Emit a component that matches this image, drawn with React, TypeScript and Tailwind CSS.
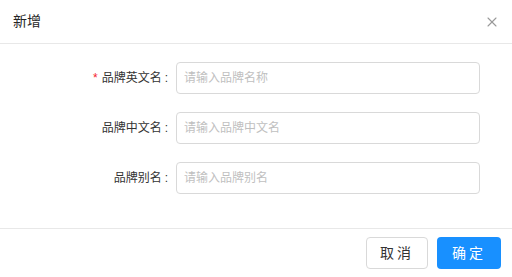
import { X } from "lucide-react";

const fields = [
  { label: "品牌英文名", placeholder: "请输入品牌名称", required: true },
  { label: "品牌中文名", placeholder: "请输入品牌中文名", required: false },
  { label: "品牌别名", placeholder: "请输入品牌别名", required: false },
];

export default function App() {
  return (
    <div
      className="w-[512px] h-[277px] bg-white flex flex-col text-[#333]"
      style={{ fontFamily: '"Liberation Sans", "Noto Sans CJK SC", sans-serif' }}
    >
      <div className="h-[44px] flex items-center justify-between pl-[13px] pr-[12px] border-b border-[#e8e8e8]">
        <span className="text-[14px] text-[#262626]">新增</span>
        <X className="w-[16px] h-[16px] text-[#999]" strokeWidth={1.6} />
      </div>

      <div className="flex-1 flex flex-col gap-[18px] pt-[18px]">
        {fields.map((f) => (
          <div key={f.label} className="flex items-center">
            <label className="w-[168px] text-right text-[12px] text-[#333]">
              {f.required && <span className="text-[#f5222d] mr-[4px]">*</span>}
              {f.label}
              <span className="ml-[3px]">:</span>
            </label>
            <input
              className="ml-[8px] w-[304px] h-[32px] rounded-[4px] border border-[#d9d9d9] px-[7px] text-[12px] placeholder:text-[#bfbfbf] outline-none"
              placeholder={f.placeholder}
            />
          </div>
        ))}
      </div>

      <div className="h-[49px] border-t border-[#e8e8e8] flex items-center justify-end gap-[9px] pr-[11px]">
        <button className="w-[62px] h-[32px] rounded-[4px] border border-[#d9d9d9] bg-white text-[14px] text-[#333] tracking-[3px]">
          取消
        </button>
        <button className="w-[64px] h-[32px] rounded-[4px] bg-[#1890ff] text-[14px] text-white tracking-[3px]">
          确定
        </button>
      </div>
    </div>
  );
}
